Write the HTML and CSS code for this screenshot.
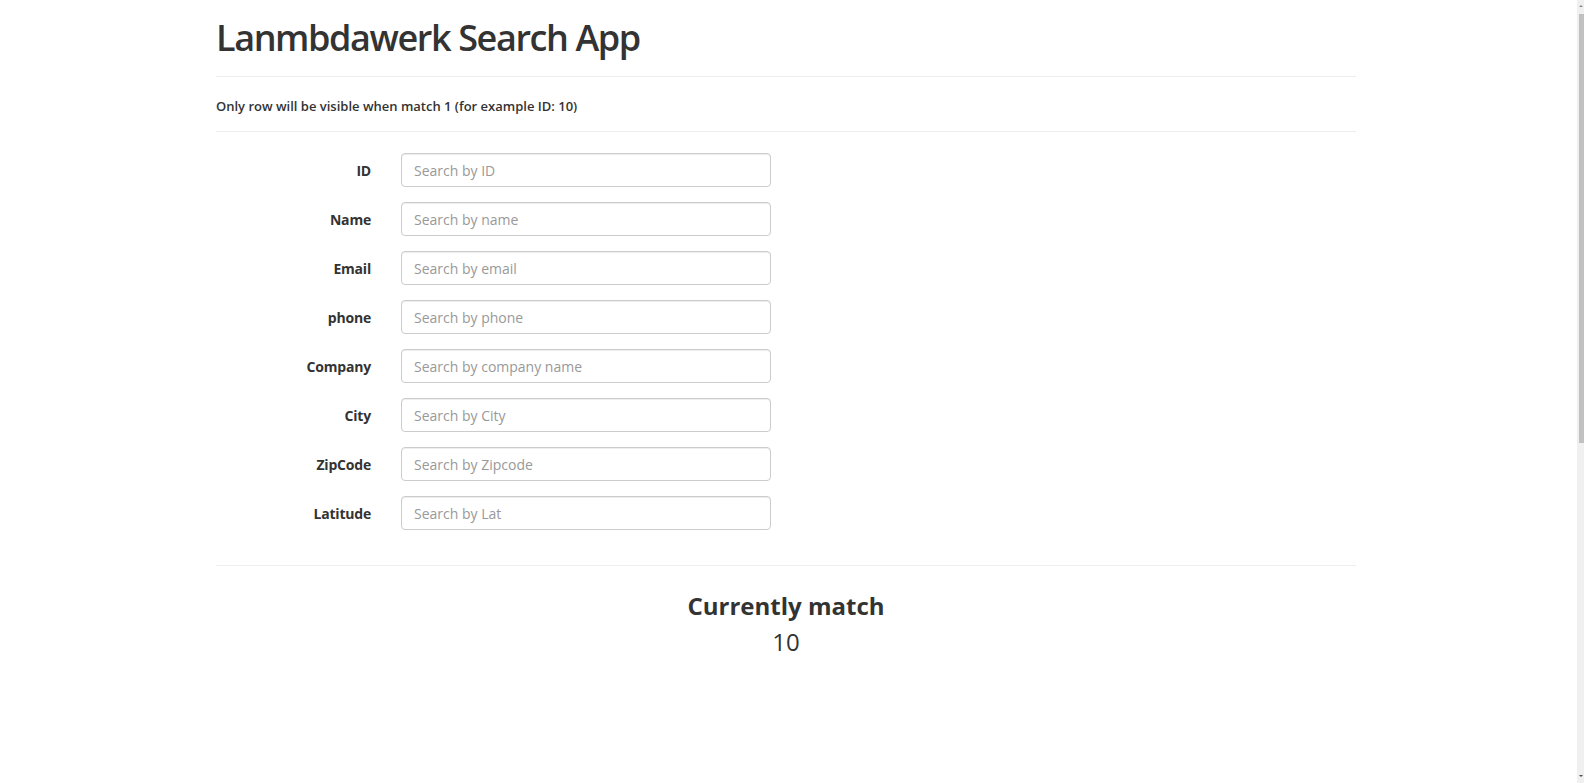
FILE: index.html
```html
<!DOCTYPE html>
<html lang="en">
<head>
<meta charset="utf-8">
<title>Lanmbdawerk Search App</title>
<link rel="stylesheet" href="styles.css">
</head>
<body>
<div class="page">
  <div class="container">
    <header class="page-header">
      <h1 class="title">Lanmbdawerk Search App</h1>
    </header>
    <p class="hint">Only row will be visible when match 1 (for example ID: 10)</p>
    <form class="search-form">
      <div class="form-row"><label class="form-label" for="f-id">ID</label><input class="form-input" id="f-id" type="text" placeholder="Search by ID"></div>
      <div class="form-row"><label class="form-label" for="f-name">Name</label><input class="form-input" id="f-name" type="text" placeholder="Search by name"></div>
      <div class="form-row"><label class="form-label" for="f-email">Email</label><input class="form-input" id="f-email" type="text" placeholder="Search by email"></div>
      <div class="form-row"><label class="form-label" for="f-phone">phone</label><input class="form-input" id="f-phone" type="text" placeholder="Search by phone"></div>
      <div class="form-row"><label class="form-label" for="f-company">Company</label><input class="form-input" id="f-company" type="text" placeholder="Search by company name"></div>
      <div class="form-row"><label class="form-label" for="f-city">City</label><input class="form-input" id="f-city" type="text" placeholder="Search by City"></div>
      <div class="form-row"><label class="form-label" for="f-zip">ZipCode</label><input class="form-input" id="f-zip" type="text" placeholder="Search by Zipcode"></div>
      <div class="form-row"><label class="form-label" for="f-lat">Latitude</label><input class="form-input" id="f-lat" type="text" placeholder="Search by Lat"></div>
    </form>
    <section class="result">
      <h3 class="result-title">Currently match</h3>
      <div class="result-count">10</div>
    </section>
  </div>
</div>
<div class="scrollbar">
  <svg class="scroll-arrow scroll-arrow-up" width="7" height="6" viewBox="0 0 7 6"><path d="M2 4 L4 2 L6 4 Z" fill="#8a8a8a"/></svg>
  <div class="scroll-thumb"></div>
  <svg class="scroll-arrow scroll-arrow-down" width="7" height="6" viewBox="0 0 7 6"><path d="M2 2 L4 4 L6 2 Z" fill="#505050"/></svg>
</div>
</body>
</html>
```
FILE: styles.css
```css
html, body {
  margin: 0;
  padding: 0;
  background: #fff;
}

body {
  font-family: "Open Sans", "Noto Sans", sans-serif;
  color: #333;
  font-size: 14px;
}

.page {
  padding-right: 12px;
}

.container {
  width: 1140px;
  margin: 0 auto;
}

.page-header {
  padding-top: 18px;
  padding-bottom: 18px;
  border-bottom: 1px solid #eee;
}

.title {
  margin: 0;
  font-size: 36px;
  line-height: 40px;
  font-weight: 600;
  letter-spacing: -1.4px;
}

.hint {
  margin: 0;
  padding: 19px 0 15px;
  font-size: 13px;
  line-height: 20px;
  font-weight: 600;
  border-bottom: 1px solid #eee;
}

.search-form {
  padding: 21px 0 35px;
  display: flex;
  flex-direction: column;
  gap: 15px;
  border-bottom: 1px solid #eee;
}

.form-row {
  display: grid;
  grid-template-columns: 155px 370px;
  column-gap: 30px;
  align-items: center;
}

.form-label {
  text-align: right;
  font-weight: 700;
  font-size: 14px;
  line-height: 20px;
  padding-top: 2px;
  letter-spacing: -0.2px;
}

.form-input {
  box-sizing: border-box;
  height: 34px;
  width: 370px;
  padding: 6px 12px;
  border: 1px solid #ccc;
  border-radius: 4px;
  font-family: inherit;
  font-size: 14px;
  color: #555;
  background: #fff;
  box-shadow: inset 0 1px 1px rgba(0,0,0,0.075);
}

.form-input::placeholder {
  color: #999;
}

.result {
  text-align: center;
  padding-top: 26px;
}

.result-title {
  margin: 0;
  font-size: 24px;
  line-height: 27px;
  font-weight: 700;
}

.result-count {
  margin-top: 9px;
  font-size: 24px;
  line-height: 27px;
}

.scrollbar {
  position: fixed;
  top: 0;
  right: 0;
  width: 7px;
  height: 100%;
  background: #f0f0f0;
}

.scroll-thumb {
  position: absolute;
  top: 14px;
  left: 2px;
  width: 5px;
  height: 429px;
  background: #c1c1c1;
}

.scroll-arrow {
  position: absolute;
  left: 0;
}

.scroll-arrow-up {
  top: 3px;
}

.scroll-arrow-down {
  bottom: 4px;
}
```
